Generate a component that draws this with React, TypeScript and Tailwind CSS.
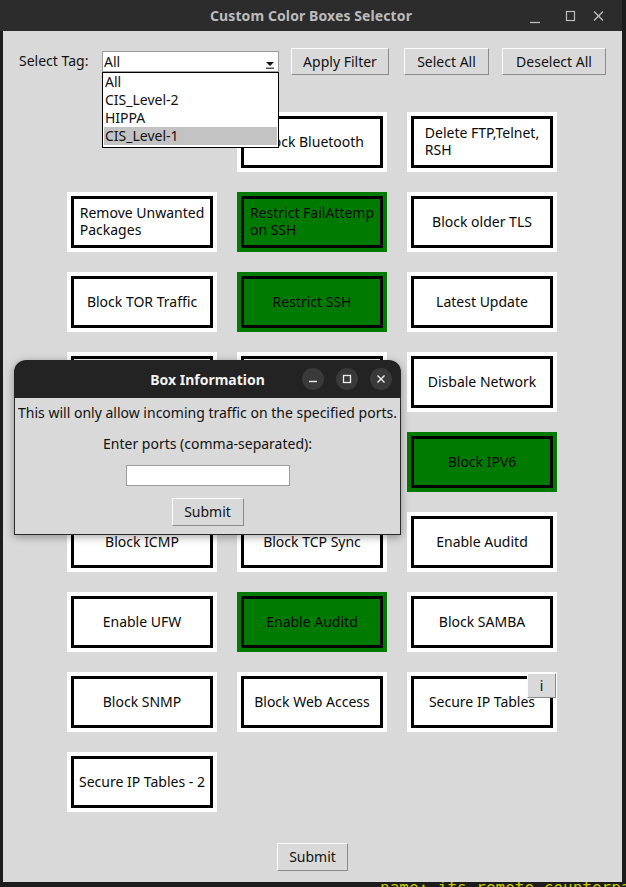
import React from "react";

type Cell = { label: string; green?: boolean; info?: boolean } | null;

const rows: Cell[][] = [
  [null, { label: "Block Bluetooth" }, { label: "Delete FTP,Telnet,\nRSH" }],
  [{ label: "Remove Unwanted\nPackages" }, { label: "Restrict FailAttemp\non SSH", green: true }, { label: "Block older TLS" }],
  [{ label: "Block TOR Traffic" }, { label: "Restrict SSH", green: true }, { label: "Latest Update" }],
  [{ label: "Block USB" }, { label: "Block Ping" }, { label: "Disbale Network" }],
  [{ label: "Disable Root" }, { label: "Block FTP" }, { label: "Block IPV6", green: true }],
  [{ label: "Block ICMP" }, { label: "Block TCP Sync" }, { label: "Enable Auditd" }],
  [{ label: "Enable UFW" }, { label: "Enable Auditd", green: true }, { label: "Block SAMBA" }],
  [{ label: "Block SNMP" }, { label: "Block Web Access" }, { label: "Secure IP Tables", info: true }],
  [{ label: "Secure IP Tables - 2" }, null, null],
];

function TkButton({ children, className }: { children: React.ReactNode; className: string }) {
  return (
    <div
      className={`flex items-center justify-center pb-[1px] bg-[#d9d9d9] border border-t-[#fbfbfb] border-l-[#fbfbfb] border-r-[#8a8a8a] border-b-[#8a8a8a] text-[14px] text-[#111] ${className}`}
    >
      {children}
    </div>
  );
}

function Box({ cell }: { cell: Cell }) {
  if (!cell) return <div className="w-[150px] h-[60px]" />;
  const lines = cell.label.split("\n");
  return (
    <div className={`relative w-[150px] h-[60px] p-[4px] ${cell.green ? "bg-[#007a00]" : "bg-white"}`}>
      <div className="w-full h-full border-[3px] border-black flex items-center justify-center pb-[2px]">
        <span className="text-left text-[14px] leading-[17px] text-[#0a0a0a] whitespace-nowrap">
          {lines.map((l, i) => (
            <React.Fragment key={i}>
              {i > 0 && <br />}
              {l}
            </React.Fragment>
          ))}
        </span>
      </div>
      {cell.info && (
        <div className="absolute left-[120px] top-[1px] w-[29px] h-[25px] flex items-center justify-center pb-[1px] bg-[#d9d9d9] border border-t-[#fbfbfb] border-l-[#fbfbfb] border-r-[#8a8a8a] border-b-[#8a8a8a] text-[14px] text-[#111]">
          i
        </div>
      )}
    </div>
  );
}

export default function App() {
  return (
    <div className="relative w-[626px] h-[887px] overflow-hidden bg-[#1c1c1c] font-['Noto_Sans',sans-serif]">
      {/* main window */}
      <div className="w-[622px]">
        <div className="h-[31px] bg-[#2c2c2c] grid grid-cols-[1fr_auto_1fr] items-center">
          <div />
          <div className="text-[14px] font-bold text-[#bcbcbc] font-['Noto_Sans',sans-serif] tracking-[0.1px]">
            Custom Color Boxes Selector
          </div>
          <div className="flex justify-end items-center pr-[12px] gap-0">
            <svg width="34" height="16" viewBox="0 0 34 16">
              <line x1="10" y1="14.5" x2="20" y2="14.5" stroke="#bdbdbd" strokeWidth="1.3" />
            </svg>
            <svg width="32" height="16" viewBox="0 0 32 16">
              <rect x="12.5" y="3.5" width="8" height="9" fill="none" stroke="#bdbdbd" strokeWidth="1.2" />
            </svg>
            <svg width="24" height="16" viewBox="0 0 24 16">
              <path d="M8 3.5 L17 12.5 M17 3.5 L8 12.5" stroke="#bdbdbd" strokeWidth="1.4" />
            </svg>
          </div>
        </div>
        <div className="relative ml-[3px] w-[619px] h-[851px] bg-[#d9d9d9]">
          {/* top controls */}
          <div className="pt-[17px] pl-[16px] flex items-center h-[44px]">
            <div className="w-[83px] text-[14px] text-[#111] pb-[2px]">Select Tag:</div>
            <div className="w-[177px] h-[21px] bg-white border border-[#9c9c9c] flex items-center justify-between">
              <span className="pl-[1px] pb-[1px] text-[14px] leading-[17px] text-[#111]">All</span>
              <svg width="12" height="12" viewBox="0 0 12 12" className="mr-[2px] mt-[4px]">
                <path d="M2 4 L10 4 L6 8 Z" fill="#111" />
                <rect x="2" y="9.5" width="8" height="1.5" fill="#555" />
              </svg>
            </div>
            <TkButton className="ml-[12px] w-[98px] h-[27px]">Apply Filter</TkButton>
            <TkButton className="ml-[15px] w-[85px] h-[27px]">Select All</TkButton>
            <TkButton className="ml-[13px] w-[104px] h-[27px]">Deselect All</TkButton>
          </div>

          {/* grid of boxes */}
          <div className="mt-[37px] pl-[64px] grid grid-cols-[150px_150px_150px] gap-x-[20px] gap-y-[20px]">
            {rows.flat().map((c, i) => (
              <Box key={i} cell={c} />
            ))}
          </div>

          <div className="mt-[31px] flex justify-center">
            <TkButton className="w-[71px] h-[28px]">Submit</TkButton>
          </div>

          {/* dropdown list */}
          <div className="absolute left-[99px] top-[41px] w-[177px] h-[76px] bg-white border border-black px-[1px] pt-0 text-[14px] text-[#111]">
            <div className="h-[18px] leading-[17px] pl-[1px]">All</div>
            <div className="h-[18px] leading-[17px] pl-[1px]">CIS_Level-2</div>
            <div className="h-[18px] leading-[17px] pl-[1px]">HIPPA</div>
            <div className="h-[18px] leading-[17px] pl-[1px] bg-[#c3c3c3]">CIS_Level-1</div>
          </div>
        </div>
      </div>

      {/* terminal text behind */}
      <div className="pl-[380px] h-[5px] overflow-hidden">
        <div className="font-['DejaVu_Sans_Mono',monospace] text-[16px] leading-[16px] -mt-[2px] text-[#c8c800] whitespace-nowrap">
          name: its remote counterpart.
        </div>
      </div>

      {/* Dialog */}
      <div className="absolute left-[14px] top-[360px] w-[387px] h-[175px] flex flex-col shadow-[0_2px_8px_rgba(0,0,0,0.35)] rounded-t-[12px]">
        <div className="h-[38px] bg-[#232323] rounded-t-[12px] grid grid-cols-[1fr_auto_1fr] items-center">
          <div />
          <div className="text-[14px] font-bold text-[#f2f2f2] font-['Noto_Sans',sans-serif]">Box Information</div>
          <div className="flex justify-end items-center gap-[12px] pr-[9px]">
            <div className="w-[22px] h-[22px] rounded-full bg-[#3a3a3a] flex items-center justify-center">
              <svg width="10" height="10" viewBox="0 0 10 10">
                <line x1="1" y1="7.5" x2="9" y2="7.5" stroke="#eee" strokeWidth="1.4" />
              </svg>
            </div>
            <div className="w-[22px] h-[22px] rounded-full bg-[#3a3a3a] flex items-center justify-center">
              <svg width="10" height="10" viewBox="0 0 10 10">
                <rect x="1.5" y="1.5" width="7" height="7" fill="none" stroke="#eee" strokeWidth="1.3" />
              </svg>
            </div>
            <div className="w-[22px] h-[22px] rounded-full bg-[#3a3a3a] flex items-center justify-center">
              <svg width="10" height="10" viewBox="0 0 10 10">
                <path d="M1.5 1.5 L8.5 8.5 M8.5 1.5 L1.5 8.5" stroke="#eee" strokeWidth="1.4" />
              </svg>
            </div>
          </div>
        </div>
        <div className="flex-1 bg-[#d9d9d9] border border-t-0 border-[#2a2a2a] flex flex-col items-center text-[14px] text-[#111]">
          <div className="mt-[6px] leading-[17px] whitespace-nowrap">
            This will only allow incoming traffic on the specified ports.
          </div>
          <div className="mt-[14px] leading-[17px]">Enter ports (comma-separated):</div>
          <div className="mt-[13px] w-[164px] h-[21px] bg-white border border-[#9c9c9c]" />
          <TkButton className="mt-[12px] w-[72px] h-[28px]">Submit</TkButton>
        </div>
      </div>
    </div>
  );
}
